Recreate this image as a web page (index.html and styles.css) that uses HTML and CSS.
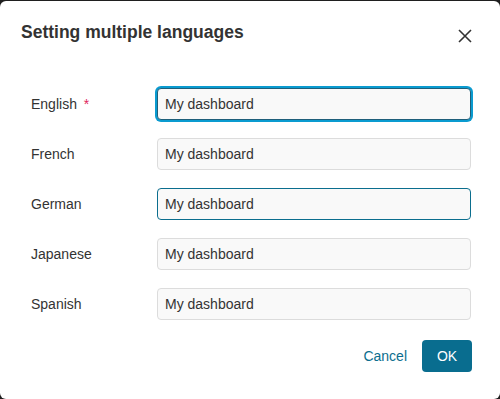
FILE: index.html
```html
<!DOCTYPE html>
<html>
<head>
<meta charset="utf-8">
<link rel="stylesheet" href="styles.css">
</head>
<body>
<div class="dialog">
  <div class="header">
    <h1 class="title">Setting multiple languages</h1>
    <button class="close" aria-label="Close">
      <svg width="14" height="14" viewBox="0 0 14 14"><path d="M1 1L13 13M13 1L1 13" stroke="#333" stroke-width="1.6" fill="none"/></svg>
    </button>
  </div>
  <div class="form">
    <label class="label">English <span class="req">*</span></label>
    <input class="field focused" value="My dashboard">
    <label class="label">French</label>
    <input class="field" value="My dashboard">
    <label class="label">German</label>
    <input class="field hover" value="My dashboard">
    <label class="label">Japanese</label>
    <input class="field" value="My dashboard">
    <label class="label">Spanish</label>
    <input class="field" value="My dashboard">
  </div>
  <div class="footer">
    <button class="cancel">Cancel</button>
    <button class="ok">OK</button>
  </div>
</div>
</body>
</html>
```
FILE: styles.css
```css
html, body {
  margin: 0;
  padding: 0;
  background: #1f1f1f;
  width: 500px;
  height: 399px;
  overflow: hidden;
  font-family: "Liberation Sans", Arial, sans-serif;
}
.dialog {
  margin-top: 1px;
  height: 398px;
  background: #fff;
  border-radius: 6px;
  box-sizing: border-box;
}
.header {
  display: flex;
  justify-content: space-between;
  align-items: flex-start;
  padding: 20px 28px 0 21px;
  height: 87px;
  box-sizing: border-box;
}
.title {
  margin: 0;
  font-size: 17.5px;
  line-height: 22px;
  font-weight: bold;
  color: #333;
}
.close {
  border: 0;
  background: none;
  padding: 0;
  margin-top: 8px;
  width: 14px;
  height: 14px;
  display: flex;
  cursor: pointer;
}
.form {
  display: grid;
  grid-template-columns: 126px 314px;
  row-gap: 18px;
  padding-left: 31px;
  align-items: center;
}
.label {
  font-size: 14px;
  color: #333;
}
.req {
  color: #e0245e;
  margin-left: 3px;
}
.field {
  box-sizing: border-box;
  height: 32px;
  width: 314px;
  border: 1px solid #dcdcdc;
  border-radius: 4px;
  background: #f9f9f9;
  padding: 0 7px;
  font-family: "Liberation Sans", Arial, sans-serif;
  font-size: 14px;
  color: #333;
  outline: none;
}
.field.focused {
  border-color: #1f5f7a;
  box-shadow: 0 0 0 2px #0a9bd0;
}
.field.hover {
  border-color: #0b6e8e;
}
.footer {
  display: flex;
  justify-content: flex-end;
  align-items: center;
  gap: 15px;
  padding: 20px 28px 0 0;
}
.cancel {
  border: 0;
  background: none;
  padding: 0;
  font-family: "Liberation Sans", Arial, sans-serif;
  font-size: 14px;
  color: #0b6e8e;
  cursor: pointer;
}
.ok {
  border: 0;
  width: 50px;
  height: 32px;
  border-radius: 4px;
  background: #096d8f;
  color: #fff;
  font-family: "Liberation Sans", Arial, sans-serif;
  font-size: 14px;
  cursor: pointer;
}
```
